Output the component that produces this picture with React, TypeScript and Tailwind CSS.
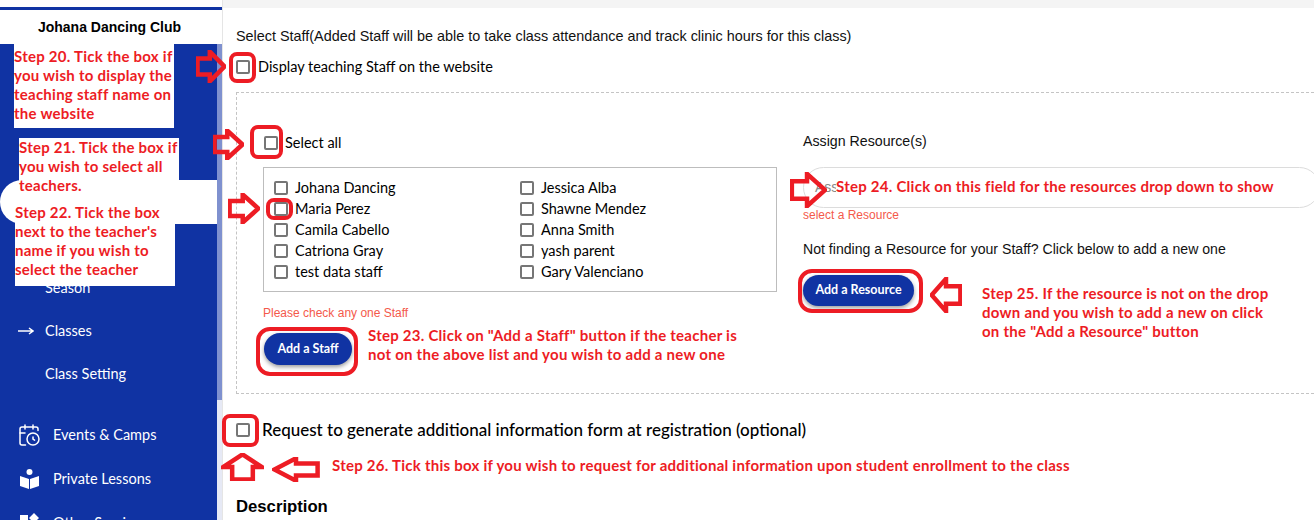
import { CalendarClock } from 'lucide-react';

const staffLeft = ['Johana Dancing', 'Maria Perez', 'Camila Cabello', 'Catriona Gray', 'test data staff'];
const staffRight = ['Jessica Alba', 'Shawne Mendez', 'Anna Smith', 'yash parent', 'Gary Valenciano'];

function Box() {
  return <span className="block w-[14px] h-[14px] shrink-0 border-2 border-[#767676] rounded-[2px] bg-white" />;
}

const arrowPoints = {
  right: '5,26 46,26 46,5 95,50 46,95 46,74 5,74',
  left: '95,26 50,26 50,5 5,50 50,95 50,74 95,74',
  up: '26,95 26,50 5,50 50,5 95,50 74,50 74,95',
};

function Arrow({ dir, className }: { dir: 'right' | 'left' | 'up'; className: string }) {
  return (
    <svg viewBox="0 0 100 100" preserveAspectRatio="none" className={`absolute ${className}`}>
      <polygon
        points={arrowPoints[dir]}
        fill="none"
        stroke="#ed1c24"
        strokeWidth="4.5"
        vectorEffect="non-scaling-stroke"
      />
    </svg>
  );
}

function Ring({ className }: { className: string }) {
  return <div className={`absolute border-4 border-[#ed1c24] rounded-[8px] ${className}`} />;
}

function Note({ className, children }: { className: string; children: React.ReactNode }) {
  return (
    <div className={`absolute whitespace-nowrap font-['Lato',sans-serif] font-bold text-[15px] tracking-[0.25px] leading-[19px] text-[#ed1c24] ${className}`}>
      {children}
    </div>
  );
}

export default function App() {
  return (
    <div className="relative flex w-[1314px] h-[520px] overflow-hidden bg-white font-['Liberation_Sans',sans-serif]">
      {/* Sidebar */}
      <aside className="w-[222px] shrink-0 flex flex-col">
        <div className="h-[7px] bg-white" />
        <div className="h-[3px] bg-[#1033a3]" />
        <div className="h-[34px] bg-white flex items-center justify-center pr-[3px] text-[14px] font-bold text-black">
          Johana Dancing Club
        </div>
        <div className="flex flex-1 min-h-0">
          <nav className="w-[217px] bg-[#1033a3] text-white font-['Lato',sans-serif] text-[14.5px] overflow-hidden">
            <div className="h-[136px]" />
            <div className="h-[44px] bg-white rounded-l-[22px]" />
            <div className="h-[42px]" />
            <div className="h-[43px] flex items-center pl-[45px]">Season</div>
            <div className="h-[43px] flex items-center pl-[18px]">
              <svg width="16" height="8" viewBox="0 0 16 8" className="mr-[11px]">
                <path d="M0 4h14M11 1l4 3-4 3" stroke="white" strokeWidth="1.5" fill="none" />
              </svg>
              Classes
            </div>
            <div className="h-[43px] flex items-center pl-[45px]">Class Setting</div>
            <div className="h-[18px]" />
            <div className="h-[44px] flex items-center pl-[17px] gap-[12px]">
              <CalendarClock size={24} strokeWidth={1.5} />
              Events &amp; Camps
            </div>
            <div className="h-[44px] flex items-center pl-[20px] gap-[14px]">
              <svg width="19" height="20" viewBox="0 0 19 20" fill="white">
                <circle cx="9.5" cy="3" r="3" />
                <path d="M0 7l9 3v10l-9-3zM19 7l-9 3v10l9-3z" />
              </svg>
              Private Lessons
            </div>
            <div className="h-[44px] flex items-center pl-[20px] gap-[14px]">
              <svg width="19" height="20" viewBox="0 0 19 20" fill="white">
                <path d="M0 2h8v8H0zM0 12h8v8H0zM10 12h8v8h-8zM14 0l5 5-5 5-5-5z" />
              </svg>
              Other Services
            </div>
          </nav>
          <div className="w-[5px] flex flex-col bg-[#e6e9f5]">
            <div className="h-[356px] bg-[#7f91cf]" />
          </div>
        </div>
      </aside>

      {/* Main form */}
      <main className="flex-1 min-w-0 flex flex-col border-l border-[#e5e5e5]">
        <div className="h-[8px] bg-[#f4f4f4] shrink-0" />
        <div className="pl-[13px] text-[14px] text-[#111]">
          <p className="mt-[20px] h-[16px] leading-[16px] text-[14.4px]">
            Select Staff(Added Staff will be able to take class attendance and track clinic hours for this class)
          </p>
          <label className="mt-[15px] h-[16px] flex items-center gap-[8px] font-['Lato',sans-serif] text-[14.5px] text-black">
            <Box />
            Display teaching Staff on the website
          </label>

          <div className="mt-[17px] h-[302px] border border-dashed border-[#c4c4c4] border-r-0 pl-[26px] flex">
            <div className="w-[540px] shrink-0">
              <label className="mt-[42px] h-[16px] flex items-center gap-[7px] pl-[1px] font-['Lato',sans-serif] text-[14.5px] text-black">
                <Box />
                Select all
              </label>
              <div className="mt-[16px] w-[514px] h-[125px] border border-[#bdbdbd] pt-[9px] pl-[10px] grid grid-cols-[246px_246px] font-['Lato',sans-serif] text-[14.5px] text-black">
                {[staffLeft, staffRight].map((col, i) => (
                  <div key={i}>
                    {col.map((name) => (
                      <div key={name} className="h-[21px] flex items-center gap-[7px]">
                        <Box />
                        {name}
                      </div>
                    ))}
                  </div>
                ))}
              </div>
              <p className="mt-[14px] h-[14px] leading-[14px] text-[12px] text-[#f4594b]">Please check any one Staff</p>
              <button className="mt-[13px] ml-[1px] w-[88px] h-[32px] rounded-full bg-[#1033a3] text-white font-['Lato',sans-serif] font-bold text-[12.5px] shadow-[0_2px_4px_rgba(0,0,0,0.4)]">
                Add a Staff
              </button>
            </div>
            <div className="flex-1 min-w-0">
              <p className="mt-[40px] h-[16px] leading-[16px] text-[14.2px]">Assign Resource(s)</p>
              <div className="mt-[18px] mr-[-6px] h-[41px] border border-[#dcdcdc] rounded-full flex items-center pl-[11px] text-[#888] text-[14px] overflow-hidden whitespace-nowrap">
                Assign
              </div>
              <p className="h-[14px] leading-[14px] text-[12px] text-[#f4594b]">select a Resource</p>
              <p className="mt-[19px] h-[16px] leading-[16px] text-[14.1px]">Not finding a Resource for your Staff? Click below to add a new one</p>
              <button className="mt-[18px] w-[111px] h-[31px] rounded-full bg-[#1033a3] text-white font-['Lato',sans-serif] font-bold text-[12.5px] shadow-[0_2px_4px_rgba(0,0,0,0.4)]">
                Add a Resource
              </button>
            </div>
          </div>

          <label className="mt-[28px] h-[16px] flex items-center gap-[12px] font-['Lato',sans-serif] font-medium text-[17px] text-black">
            <Box />
            Request to generate additional information form at registration (optional)
          </label>
          <h3 className="mt-[59px] h-[20px] leading-[20px] text-[16.7px] font-bold text-black">Description</h3>
        </div>
      </main>

      {/* Tutorial notes on top of the page */}
      <Note className="left-[14px] top-[44px] w-[160px] h-[84px] bg-white pt-[3px]">
        Step 20. Tick the box if<br />you wish to display the<br />teaching staff name on<br />the website
      </Note>
      <Note className="left-[19px] top-[138px] w-[160px] h-[62px] bg-white">
        Step 21. Tick the box if<br />you wish to select all<br />teachers.
      </Note>
      <Note className="left-[15px] top-[200px] w-[160px] h-[86px] bg-white pt-[3px]">
        Step 22. Tick the box<br />next to the teacher's<br />name if you wish to<br />select the teacher
      </Note>
      <Note className="left-[368px] top-[326px]">
        Step 23. Click on "Add a Staff" button if the teacher is<br />not on the above list and you wish to add a new one
      </Note>
      <Note className="left-[836px] top-[177px] bg-white">
        Step 24. Click on this field for the resources drop down to show
      </Note>
      <Note className="left-[982px] top-[284px]">
        Step 25. If the resource is not on the drop<br />down and you wish to add a new on click<br />on the "Add a Resource" button
      </Note>
      <Note className="left-[332px] top-[456px]">
        Step 26. Tick this box if you wish to request for additional information upon student enrollment to the class
      </Note>

      <Ring className="left-[229px] top-[52px] w-[27px] h-[31px]" />
      <Ring className="left-[250px] top-[125px] w-[33px] h-[34px]" />
      <Ring className="left-[266px] top-[198px] w-[27px] h-[22px]" />
      <Ring className="left-[256px] top-[327px] w-[102px] h-[49px] rounded-[14px]" />
      <Ring className="left-[798px] top-[269px] w-[125px] h-[44px] rounded-[14px]" />
      <Ring className="left-[222px] top-[414px] w-[37px] h-[33px]" />

      <Arrow dir="right" className="left-[196px] top-[50px] w-[30px] h-[33px]" />
      <Arrow dir="right" className="left-[213px] top-[129px] w-[31px] h-[31px]" />
      <Arrow dir="right" className="left-[228px] top-[193px] w-[32px] h-[31px]" />
      <Arrow dir="right" className="left-[790px] top-[172px] w-[37px] h-[36px]" />
      <Arrow dir="left" className="left-[930px] top-[277px] w-[32px] h-[36px]" />
      <Arrow dir="up" className="left-[221px] top-[453px] w-[43px] h-[28px]" />
      <Arrow dir="left" className="left-[272px] top-[457px] w-[48px] h-[25px]" />
    </div>
  );
}
